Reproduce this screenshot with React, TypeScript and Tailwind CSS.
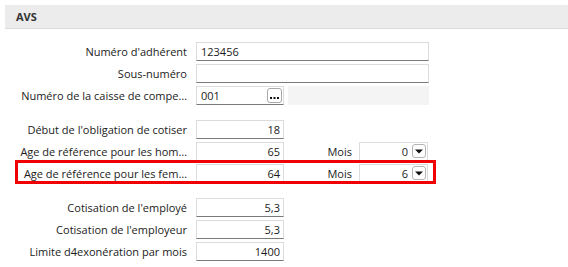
import React from 'react';

const font = { fontFamily: '"Segoe UI", "Open Sans", "Noto Sans", sans-serif' };

function Label({ children }: { children: React.ReactNode }) {
  return (
    <div className="w-[187px] shrink-0 pl-[14px] text-right whitespace-nowrap text-[#1b1b1b]">
      {children}
    </div>
  );
}

function Field({
  value = '',
  align = 'left',
  width = 'w-[88px]',
}: {
  value?: string;
  align?: 'left' | 'right';
  width?: string;
}) {
  return (
    <div
      className={`${width} h-[19px] ml-[9px] shrink-0 bg-white border border-[#dcdcdc] border-b-[#7a7a7a] flex items-center text-[#1b1b1b] ${
        align === 'right' ? 'justify-end pr-[3px]' : 'pl-[4px]'
      }`}
    >
      {value}
    </div>
  );
}

function DropArrow() {
  return (
    <div className="w-[14px] h-[14px] ml-[4px] mr-[1px] rounded-[3px] border border-[#b4b4b4] bg-white flex items-center justify-center">
      <svg width="8" height="5" viewBox="0 0 8 5">
        <path d="M0 0.5 L8 0.5 L4 4.5 Z" fill="#111" />
      </svg>
    </div>
  );
}

function MoisSelect({ value }: { value: string }) {
  return (
    <>
      <div className="w-[68px] shrink-0 text-right text-[#1b1b1b]">Mois</div>
      <div className="w-[69px] h-[19px] ml-[7px] shrink-0 bg-white border border-[#dcdcdc] border-b-[#7a7a7a] flex items-center justify-end text-[#1b1b1b]">
        {value}
        <DropArrow />
      </div>
    </>
  );
}

function Row({ children }: { children: React.ReactNode }) {
  return <div className="h-[22px] flex items-center">{children}</div>;
}

export default function App() {
  return (
    <div className="w-[568px] h-[267px] bg-white overflow-hidden text-[11px] leading-none" style={font}>
      <div className="ml-[5px] mt-[5px] h-[24px] bg-[#ececec] border-b border-[#dcdcdc] pl-[11px] flex items-center font-bold text-[#333]">
        AVS
      </div>

      <div className="mt-[11px]">
        <Row>
          <Label>Numéro d'adhérent</Label>
          <Field value="123456" width="w-[233px]" />
        </Row>
        <Row>
          <Label>Sous-numéro</Label>
          <Field width="w-[233px]" />
        </Row>
        <Row>
          <Label>Numéro de la caisse de compe…</Label>
          <div className="w-[88px] h-[19px] ml-[9px] shrink-0 bg-white border border-[#dcdcdc] border-b-[#7a7a7a] flex items-center pl-[4px] text-[#1b1b1b]">
            <span className="flex-1">001</span>
            <div className="w-[15px] h-[15px] mr-[1px] rounded-[3px] border border-[#a8a8a8] bg-white flex items-end justify-center pb-[2px]">
              <svg width="9" height="3" viewBox="0 0 9 3">
                <rect x="0" y="0" width="2" height="2" fill="#111" />
                <rect x="3.5" y="0" width="2" height="2" fill="#111" />
                <rect x="7" y="0" width="2" height="2" fill="#111" />
              </svg>
            </div>
          </div>
          <div className="w-[141px] h-[19px] ml-[4px] bg-[#f4f4f4]" />
        </Row>
      </div>

      <div className="mt-[12px]">
        <Row>
          <Label>Début de l'obligation de cotiser</Label>
          <Field value="18" align="right" />
        </Row>
        <Row>
          <Label>Age de référence pour les hom…</Label>
          <Field value="65" align="right" />
          <MoisSelect value="0" />
        </Row>
        <div className="relative">
          <Row>
            <Label>Age de référence pour les fem…</Label>
            <Field value="64" align="right" />
            <MoisSelect value="6" />
          </Row>
          <div className="absolute left-[15px] top-[-2px] w-[421px] h-[24px] border-[3px] border-[#f00000] pointer-events-none" />
        </div>
      </div>

      <div className="mt-[12px]">
        <Row>
          <Label>Cotisation de l'employé</Label>
          <Field value="5,3" align="right" />
        </Row>
        <Row>
          <Label>Cotisation de l'employeur</Label>
          <Field value="5,3" align="right" />
        </Row>
        <Row>
          <Label>Limite d4exonération par mois</Label>
          <Field value="1400" align="right" />
        </Row>
      </div>
    </div>
  );
}
